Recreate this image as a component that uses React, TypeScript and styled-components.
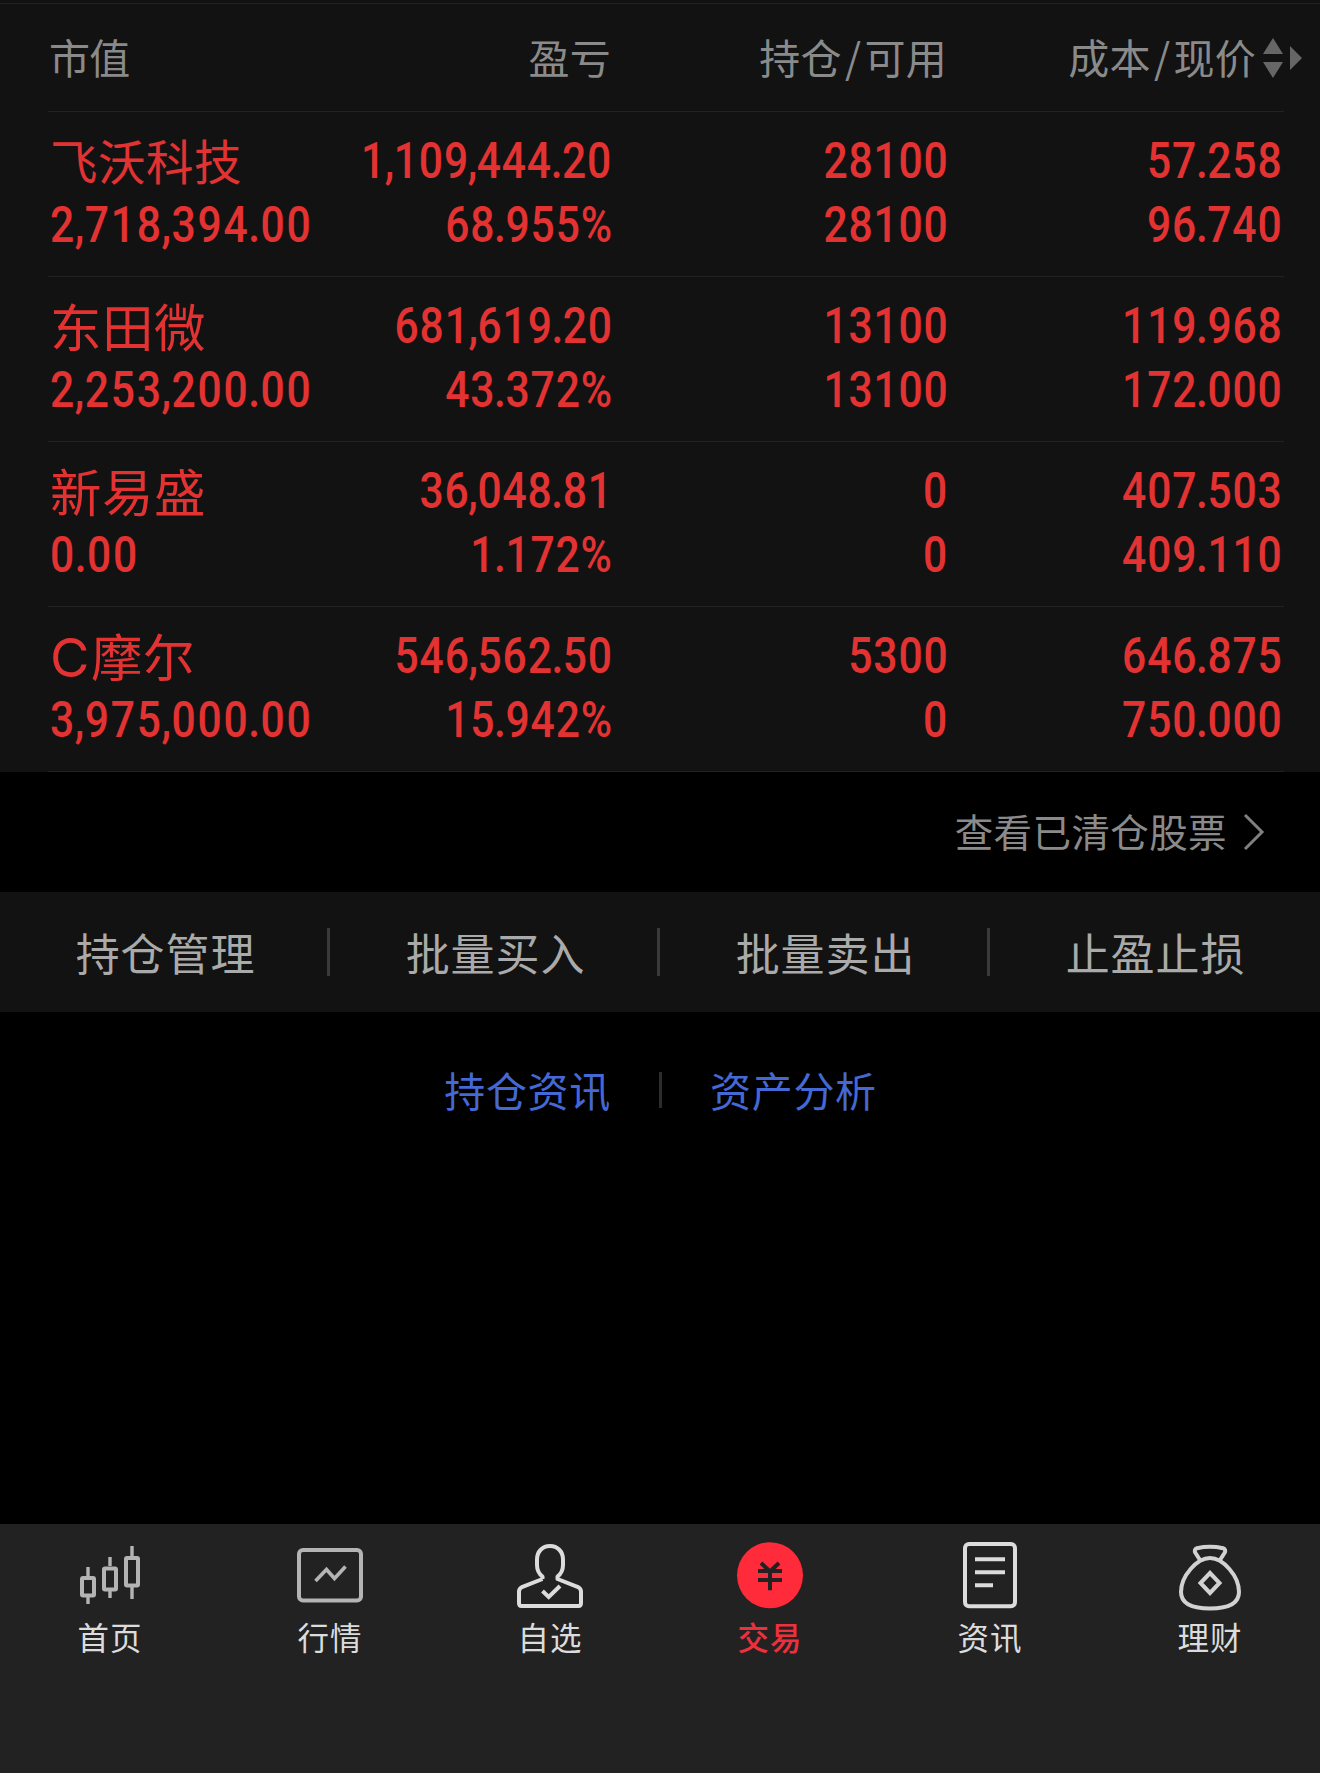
import React from "react";
import styled, { createGlobalStyle, css } from "styled-components";

const CJK = `"Noto Sans CJK SC", sans-serif`;

const GlobalStyle = createGlobalStyle`
  body {
    margin: 0;
    background: #000;
    font-family: ${CJK};
  }
`;

const Screen = styled.div`
  display: flex;
  flex-direction: column;
  width: 1320px;
  height: 1773px;
  overflow: hidden;
  background: #000;
`;

const Panel = styled.section`
  flex: none;
  box-sizing: border-box;
  height: 772px;
  padding: 0 36px 0 48px;
  background: #121212;
`;

const TopRule = styled.div`
  height: 1px;
  margin: 3px -36px 0 -48px;
  background: #222;
`;

const columns = css`
  display: grid;
  grid-template-columns: 282px 280px 336px 334px;
  box-sizing: border-box;
  padding-left: 2px;
`;

const HeadRow = styled.div`
  ${columns}
  height: 108px;
  align-items: center;
  padding-bottom: 3px;
  border-bottom: 1px solid #222;
`;

const HeadCell = styled.div<{ $right?: boolean }>`
  display: flex;
  justify-content: ${(p) => (p.$right ? "flex-end" : "flex-start")};
  align-items: center;
  margin-left: -1px;
  margin-right: 1px;
  font-size: 41px;
  line-height: 60px;
  letter-spacing: ${(p) => (p.$right ? 0.2 : -0.8)}px;
  color: #8a8a8a;
  white-space: nowrap;
`;

const Slash = styled.span`
  width: 23px;
  text-align: center;
`;

const SortMark = styled.svg`
  flex: none;
  width: 40px;
  height: 42px;
  margin: 3px -21px 0 6px;
  fill: #666;
`;

const Row = styled.div`
  ${columns}
  height: 165px;
  padding-top: 17px;
  border-bottom: 1px solid #222;
`;

const Cell = styled.div<{ $right?: boolean }>`
  display: flex;
  flex-direction: column;
  align-items: ${(p) => (p.$right ? "flex-end" : "flex-start")};
  color: #e33232;
`;

const Name = styled.div<{ $small?: boolean }>`
  height: 64px;
  font-size: ${(p) => (p.$small ? 47.5 : 51.5)}px;
  line-height: ${(p) => (p.$small ? 62 : 61)}px;
  letter-spacing: 0.5px;
  white-space: nowrap;
`;

const Latin = styled.span`
  font-family: Inter, sans-serif;
  font-weight: 400;
  font-size: 54px;
  line-height: 1;
  letter-spacing: 1.5px;
`;

const NumText = styled.div<{ $left?: boolean }>`
  height: 64px;
  font-family: Roboto, sans-serif;
  font-weight: 500;
  font-size: 49.5px;
  line-height: 64px;
  letter-spacing: ${(p) => (p.$left ? 2.1 : 1)}px;
  margin-right: ${(p) => (p.$left ? 0 : -0.5)}px;
  transform: scaleX(0.86);
  transform-origin: ${(p) => (p.$left ? "left" : "right")};
  white-space: nowrap;
`;

const Point = styled.span`
  margin: 0 -1.5px 0 -1.5px;
`;

const ClearedLink = styled.div`
  flex: none;
  display: flex;
  justify-content: flex-end;
  align-items: center;
  gap: 16px;
  box-sizing: border-box;
  height: 120px;
  padding: 0 55px 4px 0;
  font-size: 38.5px;
  letter-spacing: 0.4px;
  color: #8a8a8a;
`;

const Chevron = styled.svg`
  margin-top: 4px;
`;

const Toolbar = styled.div`
  flex: none;
  display: grid;
  grid-template-columns: repeat(4, 330px);
  height: 120px;
  background: #121212;
`;

const Tool = styled.div`
  display: flex;
  align-items: center;
  font-size: 44px;
  letter-spacing: 0.9px;
  color: #aaa;

  &:last-child {
    padding-right: 3px;
  }
`;

const ToolLabel = styled.span`
  flex: 1;
  padding-left: 4px;
  text-align: center;
  line-height: 60px;
`;

const Divider = styled.i<{ $h: number; $color: string }>`
  flex: none;
  width: 3px;
  height: ${(p) => p.$h}px;
  background: ${(p) => p.$color};
`;

const Links = styled.div`
  display: flex;
  flex: 1;
  justify-content: center;
  align-items: flex-start;
  padding: 47px 0 0 1px;
`;

const LinkRow = styled.div`
  display: flex;
  align-items: center;
  gap: 48px;
  font-size: 41px;
  line-height: 60px;
  letter-spacing: 0.7px;
  color: #4468d4;
`;

const LinkDivider = styled(Divider)`
  margin-top: 2px;
`;

const TabBar = styled.nav`
  flex: none;
  display: grid;
  grid-template-columns: repeat(6, 220px);
  height: 249px;
  background: #222;
`;

const Tab = styled.div<{ $active?: boolean }>`
  display: flex;
  flex-direction: column;
  align-items: center;
  padding-top: 16px;
  font-size: 31.5px;
  font-weight: ${(p) => (p.$active ? 500 : 400)};
  line-height: 46px;
  letter-spacing: 1.1px;
  color: ${(p) => (p.$active ? "#ee2f3c" : "#dcdcdc")};
`;

const TabIcon = styled.svg`
  width: 70px;
  height: 72px;
  margin-bottom: 1px;
  fill: none;
`;

const holdings = [
  ["飞沃科技", "2,718,394.00", "1,109,444.20", "68.955%", "28100", "28100", "57.258", "96.740"],
  ["东田微", "2,253,200.00", "681,619.20", "43.372%", "13100", "13100", "119.968", "172.000"],
  ["新易盛", "0.00", "36,048.81", "1.172%", "0", "0", "407.503", "409.110"],
  ["C摩尔", "3,975,000.00", "546,562.50", "15.942%", "5300", "0", "646.875", "750.000"],
];

const tools = ["持仓管理", "批量买入", "批量卖出", "止盈止损"];

/* Commas and decimal points are set tighter than the digits round them. */
function Num({ left, children }: { left?: boolean; children: string }) {
  return (
    <NumText $left={left}>
      {children.split(/([.,])/).map((part, i) => (i % 2 ? <Point key={i}>{part}</Point> : part))}
    </NumText>
  );
}

function StockName({ name }: { name: string }) {
  const latin = name.match(/^[A-Z]+/)?.[0] ?? "";
  return (
    <Name $small={name.length > 3}>
      {latin && <Latin>{latin}</Latin>}
      {name.slice(latin.length)}
    </Name>
  );
}

/* Icons share a 70x72 box whose centre is the tab's centre line. */
const icons: Record<string, React.ReactNode> = {
  首页: (
    <g stroke="#b4b4b4" strokeWidth="4">
      <rect x="7" y="38" width="12" height="17.500" rx="1" />
      <rect x="29" y="28.500" width="12" height="21" rx="1" />
      <rect x="51" y="18" width="12" height="27.500" rx="1" />
      <path strokeWidth="3.4" d="M13 27v9M13 57v7M35 17v9M35 51v7M57 6v10M57 47v12" />
    </g>
  ),
  行情: (
    <g stroke="#b4b4b4" strokeWidth="4">
      <rect x="4" y="10" width="62" height="50.500" rx="4" />
      <path strokeWidth="3.6" d="M20.500 41L31.500 29.500L39.500 38.500L50.500 26.500" />
    </g>
  ),
  自选: (
    <g stroke="#dcdcdc" strokeWidth="4" strokeLinejoin="round">
      <path d="M27.500 39V36.500C23.500 33.500 22 30 22 25V19.500C22 11.500 27.500 6 35 6S48 11.500 48 19.500V25C48 30 46.500 33.500 42.500 36.500V39L62.500 46.800Q66 48.500 66 51.500V63Q66 66 63.500 66H6.500Q4 66 4 63V51.500Q4 48.500 7.500 46.800L27.500 39" />
      <path strokeLinejoin="miter" d="M27.500 51L33.700 57L45 46" />
    </g>
  ),
  交易: (
    <g>
      <circle cx="35" cy="35.300" r="33" fill="#ff2a3a" />
      <path stroke="#222" strokeWidth="4" d="M26 23L35 31.500L44 23M23 31H47M23 40H47M35 31V50.300" />
    </g>
  ),
  资讯: (
    <g stroke="#dcdcdc" strokeWidth="4">
      <rect x="10" y="4" width="50" height="62.300" rx="4" />
      <path d="M20 19.200H50M20 32.200H50M20 45.200H38" />
    </g>
  ),
  理财: (
    <g stroke="#d2d2d2" strokeWidth="4" strokeLinejoin="round">
      <path d="M25 20L20.500 13Q18.500 9.500 22 8.200Q35 5.500 48 8.200Q51.500 9.500 49.500 13L45 20" />
      <path d="M35 18C48 18 64 36 64 52C64 64 53 68.500 35 68.500S6 64 6 52C6 36 22 18 35 18Z" />
      <path strokeLinejoin="miter" d="M35 33L44.500 43L35 53L25.500 43Z" />
    </g>
  ),
};

export default function App() {
  return (
    <>
      <GlobalStyle />
      <Screen>
        <Panel>
          <TopRule />
          <HeadRow>
            <HeadCell>市值</HeadCell>
            <HeadCell $right>盈亏</HeadCell>
            <HeadCell $right>
              持仓<Slash>/</Slash>可用
            </HeadCell>
            <HeadCell $right>
              成本<Slash>/</Slash>现价
              <SortMark viewBox="0 0 40 42">
                <path d="M11 1L21 17H1ZM1 25H21L11 41ZM28 9L40 21L28 33Z" />
              </SortMark>
            </HeadCell>
          </HeadRow>
          {holdings.map(([name, value, profit, rate, held, usable, cost, price]) => (
            <Row key={name}>
              <Cell>
                <StockName name={name} />
                <Num left>{value}</Num>
              </Cell>
              <Cell $right>
                <Num>{profit}</Num>
                <Num>{rate}</Num>
              </Cell>
              <Cell $right>
                <Num>{held}</Num>
                <Num>{usable}</Num>
              </Cell>
              <Cell $right>
                <Num>{cost}</Num>
                <Num>{price}</Num>
              </Cell>
            </Row>
          ))}
        </Panel>
        <ClearedLink>
          查看已清仓股票
          <Chevron width="22" height="38" viewBox="0 0 22 38" fill="none" stroke="#808080" strokeWidth="3">
            <path d="M2 2L19 19L2 36" />
          </Chevron>
        </ClearedLink>
        <Toolbar>
          {tools.map((label, i) => (
            <Tool key={label}>
              <ToolLabel>{label}</ToolLabel>
              {i < 3 && <Divider $h={48} $color="#3a3a3a" />}
            </Tool>
          ))}
        </Toolbar>
        <Links>
          <LinkRow>
            <span>持仓资讯</span>
            <LinkDivider $h={36} $color="#2c2c2c" />
            <span>资产分析</span>
          </LinkRow>
        </Links>
        <TabBar>
          {Object.keys(icons).map((label) => (
            <Tab key={label} $active={label === "交易"}>
              <TabIcon viewBox="0 0 70 72">{icons[label]}</TabIcon>
              {label}
            </Tab>
          ))}
        </TabBar>
      </Screen>
    </>
  );
}
